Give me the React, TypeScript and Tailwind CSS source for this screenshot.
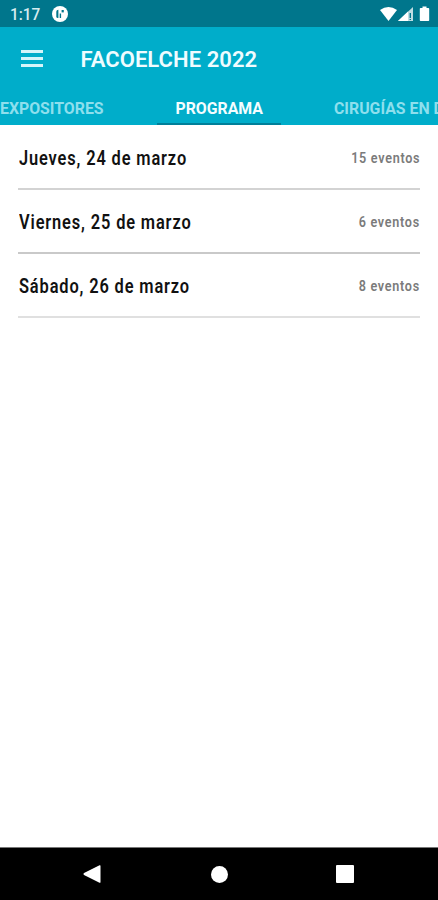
import React from "react";

const days = [
  { label: "Jueves, 24 de marzo", events: "15 eventos", line: "bg-[#d3d3d3]" },
  { label: "Viernes, 25 de marzo", events: "6 eventos", line: "bg-[#c9c9c9]" },
  { label: "Sábado, 26 de marzo", events: "8 eventos", line: "bg-[#e0e0e0]" },
];

export default function App() {
  return (
    <div className="flex h-[900px] w-[438px] flex-col overflow-hidden bg-white font-['Roboto',sans-serif]">
      <StatusBar />

      <header className="flex h-[98px] shrink-0 flex-col bg-[#00adca]">
        <div className="flex h-[65px] items-center pl-[21px]">
          <button aria-label="Menú" className="-mt-0.5 flex w-[22px] flex-col gap-1">
            <span className="h-[3px] bg-[#d5f5fa]" />
            <span className="h-[3px] bg-[#d5f5fa]" />
            <span className="h-[3px] bg-[#d5f5fa]" />
          </button>
          <h1 className="ml-[37.5px] whitespace-nowrap text-[22px] font-semibold tracking-[0.05px] text-[#effcff]">
            FACOELCHE 2022
          </h1>
        </div>
        <Tabs />
      </header>

      <main className="flex-1 px-[18px] pt-px">
        {days.map((d) => (
          <DayRow key={d.label} {...d} />
        ))}
      </main>

      <NavBar />
    </div>
  );
}

function StatusBar() {
  return (
    <div className="flex h-[27px] shrink-0 items-center bg-[#00768c] pl-[10px] pt-px text-[#d5ecf0]">
      <span className="w-[42px] pt-px text-base">
        <span className="inline-block origin-left scale-x-[.96] font-medium">1:17</span>
      </span>
      <svg width="16" height="16" viewBox="0 0 16 16">
        <circle cx="8" cy="8" r="8" fill="#fff" />
        <path d="M6.4 3.8v8.2H5.8Q4.3 12 4.3 10.5V5.8Q4.3 3.8 6.4 3.8Z" fill="#00768c" />
        <path d="M8.4 7.5V12" stroke="#00768c" strokeWidth="1.4" />
        <path d="M9.6 4h2.2v2.4H9.6Z" fill="#00768c" />
      </svg>
      {/* wifi, signal, battery */}
      <svg className="ml-auto mr-[6px]" width="52" height="18" viewBox="0 0 52 18" fill="#fff">
        <path d="M0 5Q8.5-1.2 17 5L8.5 16Z" />
        <path d="M33 2v14H18Z" opacity=".75" />
        <path d="M28 6.5V16H18Z" />
        <path d="M30.3 8v5M30.3 14v1" stroke="#00768c" strokeWidth="1.4" />
        <path d="M42.5 1.5h4V3h1.9q.8 0 .8.8v11.4q0 .8-.8.8h-7.8q-.8 0-.8-.8V3.8q0-.8.8-.8h1.9Z" />
      </svg>
    </div>
  );
}

function Tabs() {
  return (
    <nav className="flex h-[33px] whitespace-nowrap text-base font-bold text-[#8edfed]">
      <div className="w-[157px] shrink-0 pt-[5px]">
        <span className="inline-block origin-left scale-x-[.99]">EXPOSITORES</span>
      </div>
      <div className="flex w-[124px] shrink-0 flex-col items-center border-b-2 border-[#007f99] pt-[5px] text-[#f4fdff]">
        <span className="inline-block scale-x-[.99]">PROGRAMA</span>
      </div>
      <div className="ml-[53px] shrink-0 pt-[5px]">
        <span className="inline-block origin-left scale-x-[.99]">CIRUGÍAS EN DIRECTO</span>
      </div>
    </nav>
  );
}

function DayRow({ label, events, line }: { label: string; events: string; line: string }) {
  return (
    <div className="flex h-16 flex-col whitespace-nowrap">
      <div className="flex flex-1 items-center justify-between pt-0.5">
        <span className="ml-px origin-left scale-x-[.82] text-xl font-semibold tracking-[1.05px] text-[#111]">
          {label}
        </span>
        <span className="origin-right scale-x-[.84] text-[15px] font-semibold tracking-[0.85px] text-[#7b7b7b]">
          {events}
        </span>
      </div>
      <div className={`h-0.5 ${line}`} />
    </div>
  );
}

function NavBar() {
  return (
    <footer className="flex h-[53px] shrink-0 items-center border-t border-[#777] bg-black pl-[83px]">
      <svg width="18" height="18" viewBox="0 0 18 18" fill="#fff">
        <path d="M16.5.3Q17.5-.2 17.5 1v16q0 1.2-1 .7L1 10Q0 9 1 8Z" />
      </svg>
      <span className="ml-[110px] size-[17px] rounded-full bg-white" />
      <span className="ml-[108px] size-[18px] rounded-[1px] bg-white" />
    </footer>
  );
}
